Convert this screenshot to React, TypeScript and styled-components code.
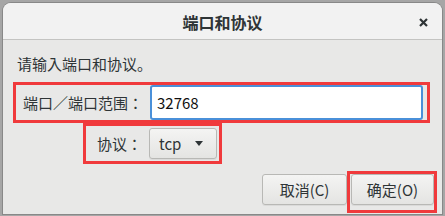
import React from "react";
import styled, { createGlobalStyle } from "styled-components";

const GlobalStyle = createGlobalStyle`
  html, body {
    margin: 0;
    padding: 0;
    background: #a6a6a6;
    font-family: "Noto Sans CJK JP", "Noto Sans CJK SC", "Noto Sans", sans-serif;
    color: #2e3436;
  }
`;

const Screen = styled.div`
  width: 445px;
  height: 216px;
  padding: 3px 0 0 3px;
  box-sizing: border-box;
  overflow: hidden;
`;

const Dialog = styled.div`
  width: 439px;
  height: 211px;
  background: #e8e8e7;
  border-radius: 8px 8px 0 0;
  box-shadow: 0 0 0 1px rgba(0, 0, 0, 0.18);
  display: flex;
  flex-direction: column;
  overflow: hidden;
`;

const Header = styled.div`
  height: 36px;
  flex: none;
  background: #f2f2f2;
  border-bottom: 1px solid #c4c4c2;
  display: flex;
  align-items: center;
  justify-content: center;
  position: relative;
`;

const Title = styled.div`
  font-size: 16px;
  font-weight: bold;
  line-height: 20px;
  padding-top: 1px;
`;

const CloseButton = styled.div`
  position: absolute;
  right: 14px;
  top: 15px;
  width: 9px;
  height: 9px;
  display: flex;
`;

const Body = styled.div`
  flex: 1;
  padding: 14px 5px 0 10px;
  display: flex;
  flex-direction: column;
`;

const Intro = styled.div`
  font-size: 15px;
  line-height: 20px;
  padding-left: 4px;
  margin-bottom: 8px;
`;

const Marked = styled.div<{ $width?: number; $indent?: number }>`
  border: 3px solid #f03a3c;
  box-sizing: border-box;
  width: ${(p) => (p.$width ? `${p.$width}px` : "auto")};
  margin-left: ${(p) => p.$indent ?? 0}px;
  display: flex;
  align-items: center;
  height: 41px;
`;

const FieldRow = styled.div<{ $pad: number }>`
  display: flex;
  align-items: center;
  gap: 7px;
  padding-left: ${(p) => p.$pad}px;
  padding-right: 2px;
  flex: 1;
  height: 35px;
`;

const Label = styled.span`
  font-size: 15px;
  line-height: 20px;
  white-space: nowrap;
`;

const Input = styled.div`
  flex: 1;
  height: 35px;
  box-sizing: border-box;
  margin-right: 2px;
  background: #ffffff;
  border: 2px solid #4a90d9;
  border-radius: 3px;
  padding-left: 5px;
  display: flex;
  align-items: center;
  font-size: 15px;
  color: #111;
`;

const Button = styled.div<{ $width: number }>`
  width: ${(p) => p.$width}px;
  height: 31px;
  box-sizing: border-box;
  border: 1px solid #b8b8b5;
  border-radius: 3px;
  background: linear-gradient(#f4f4f3, #e4e4e2);
  box-shadow: 0 1px 0 rgba(0, 0, 0, 0.06);
  display: flex;
  align-items: center;
  justify-content: center;
  font-size: 15px;
  color: #2e3436;
  flex: none;
`;

const Combo = styled(Button)`
  justify-content: space-between;
  padding: 0 13px 0 9px;
`;

const Caret = styled.span`
  width: 0;
  height: 0;
  border-left: 4px solid transparent;
  border-right: 4px solid transparent;
  border-top: 5px solid #2e3436;
`;

const Actions = styled.div`
  display: flex;
  justify-content: flex-end;
  align-items: flex-start;
  margin-top: 7px;
`;

const CancelSlot = styled.div`
  margin-top: 3px;
`;

const OkMark = styled.div`
  border: 3px solid #f03a3c;
  padding: 0 0 5px 1px;
  width: 90px;
  box-sizing: border-box;
`;

export default function App() {
  return (
    <>
      <GlobalStyle />
      <Screen>
        <Dialog>
          <Header>
            <Title>端口和协议</Title>
            <CloseButton>
              <svg width="9" height="9" viewBox="0 0 9 9">
                <path d="M1 1 L8 8 M8 1 L1 8" stroke="#2e3436" strokeWidth="2.2" />
              </svg>
            </CloseButton>
          </Header>
          <Body>
            <Intro>请输入端口和协议。</Intro>
            <Marked $width={417}>
              <FieldRow $pad={7}>
                <Label>端口／端口范围：</Label>
                <Input>32768</Input>
              </FieldRow>
            </Marked>
            <Marked $width={139} $indent={70}>
              <FieldRow $pad={11}>
                <Label>协议：</Label>
                <Combo $width={68}>
                  tcp
                  <Caret />
                </Combo>
              </FieldRow>
            </Marked>
            <Actions>
              <CancelSlot>
                <Button $width={85}>取消(C)</Button>
              </CancelSlot>
              <OkMark>
                <Button $width={83}>确定(O)</Button>
              </OkMark>
            </Actions>
          </Body>
        </Dialog>
      </Screen>
    </>
  );
}
